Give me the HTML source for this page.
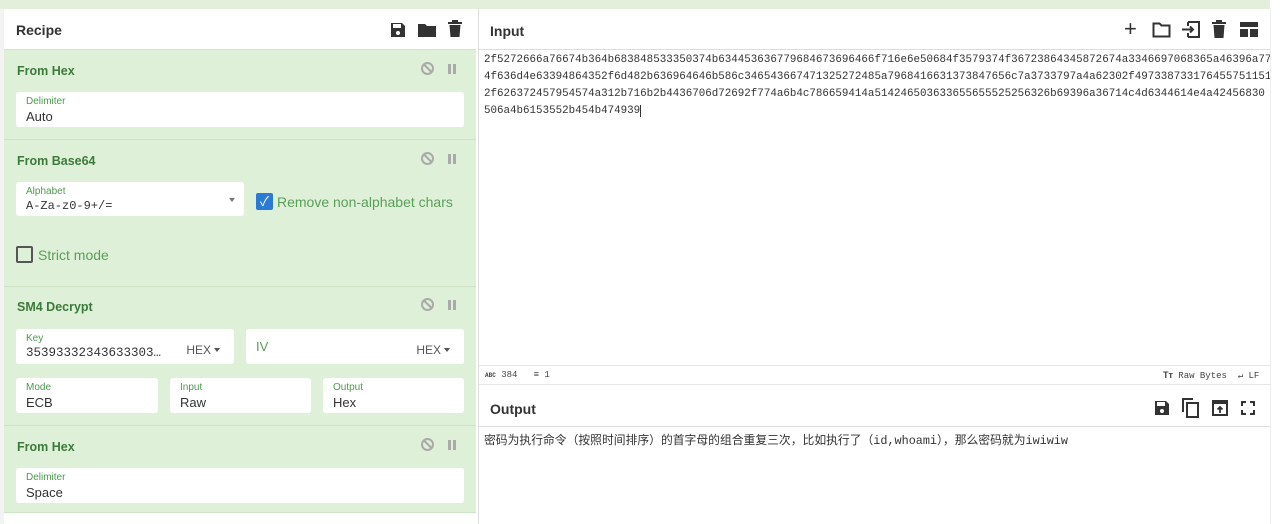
<!DOCTYPE html>
<html><head><meta charset="utf-8"><style>
*{box-sizing:border-box;margin:0;padding:0}
body{width:1280px;height:524px;overflow:hidden;background:#fff;font-family:"Liberation Sans","Noto Sans CJK SC",sans-serif;position:relative;color:#333}
.a{position:absolute}
.top{left:0;top:0;width:1270px;height:9px;background:#e3efdb}
.hdr{background:#fff;border-bottom:1px solid #ddd;height:40px}
.hdr b{position:absolute;left:12px;top:12px;font-size:14px;color:#333}
.card{left:4px;width:472px;background:#dff0d8;border-bottom:1px solid #cfe3c7}
.ct{position:absolute;left:13px;font-size:12.5px;font-weight:bold;color:#3c7a3c}
.fld{position:absolute;background:#fff;border-radius:3px}
.lb{position:absolute;left:10px;top:4px;font-size:10px;color:#4c9a4c}
.vl{position:absolute;left:10px;top:17px;font-size:13px;color:#333}
.mono{font-family:"Liberation Mono",monospace;font-size:12px}
.ban{position:absolute;width:13px;height:13px;border:2px solid #aaa;border-radius:50%}
.ban:after{content:"";position:absolute;left:3.5px;top:-1px;width:2px;height:11px;background:#aaa;transform:rotate(-45deg)}
.pz{position:absolute;width:8px;height:10px;border-left:3px solid #aaa;border-right:3px solid #aaa}
.hex{position:absolute;right:14px;top:14px;font-size:12px;color:#555}
.hex:after{content:"";display:inline-block;margin-left:3px;vertical-align:2px;border:3.5px solid transparent;border-top:4px solid #555;border-bottom:0}
.txt{font-family:"Liberation Mono",monospace;font-size:10.85px;line-height:17px;color:#333}
</style></head><body>
<div class="a top"></div>
<div class="a" style="left:0;top:9px;width:4px;height:515px;background:#f3f3f3"></div>
<div class="a hdr" style="left:4px;top:10px;width:472px"><b>Recipe</b>
<svg class="a" style="left:385px;top:11px" width="18" height="18" viewBox="0 0 18 18"><path d="M2 2h11l3 3v11H2z" fill="#333"/><rect x="4" y="3" width="8" height="4" fill="#fff"/><circle cx="9" cy="12" r="2" fill="#fff"/></svg>
<svg class="a" style="left:413px;top:12px" width="20" height="16" viewBox="0 0 20 16"><path d="M1 2h7l2 2h9v11H1z" fill="#333"/></svg>
<svg class="a" style="left:443px;top:10px" width="16" height="18" viewBox="0 0 16 18"><rect x="1" y="2" width="14" height="2" fill="#333"/><rect x="5" y="0" width="6" height="2" fill="#333"/><path d="M2.5 5h11l-1 12h-9z" fill="#333"/></svg>
</div>
<div class="a card" style="top:50px;height:90px">
<div class="ct" style="top:14px">From Hex</div>
<div class="ban" style="left:417px;top:12px"></div><div class="pz" style="left:444px;top:14px"></div>
<div class="fld" style="left:12px;top:42px;width:448px;height:35px"><div class="lb">Delimiter</div><div class="vl">Auto</div></div>
</div>
<div class="a card" style="top:140px;height:147px">
<div class="ct" style="top:14px">From Base64</div>
<div class="ban" style="left:417px;top:12px"></div><div class="pz" style="left:444px;top:14px"></div>
<div class="fld" style="left:12px;top:42px;width:228px;height:34px"><div class="lb">Alphabet</div><div class="vl mono">A-Za-z0-9+/=</div><div class="a" style="right:9px;top:16px;border:3.5px solid transparent;border-top:4px solid #777;border-bottom:0"></div></div>
<div class="a" style="left:252px;top:53px;width:17px;height:17px;background:#2b7bd4;border-radius:2px;color:#fff;font-size:13px;text-align:center;line-height:17px">✓</div>
<div class="a" style="left:273px;top:54px;font-size:14px;color:#5a9e5a">Remove non-alphabet chars</div>
<div class="a" style="left:12px;top:106px;width:17px;height:17px;border:2px solid #555;border-radius:2px"></div>
<div class="a" style="left:34px;top:107px;font-size:14px;color:#5a9e5a">Strict mode</div>
</div>
<div class="a card" style="top:287px;height:139px">
<div class="ct" style="top:13px">SM4 Decrypt</div>
<div class="ban" style="left:417px;top:11px"></div><div class="pz" style="left:444px;top:13px"></div>
<div class="fld" style="left:12px;top:42px;width:218px;height:35px"><div class="lb">Key</div><div class="vl mono" style="font-size:12.5px">35393332343633303…</div><div class="hex">HEX</div></div>
<div class="fld" style="left:242px;top:42px;width:218px;height:35px"><div class="a" style="left:10px;top:10px;font-size:13px;color:#5a9e5a">IV</div><div class="hex">HEX</div></div>
<div class="fld" style="left:12px;top:91px;width:142px;height:35px"><div class="lb">Mode</div><div class="vl">ECB</div></div>
<div class="fld" style="left:166px;top:91px;width:141px;height:35px"><div class="lb">Input</div><div class="vl">Raw</div></div>
<div class="fld" style="left:319px;top:91px;width:141px;height:35px"><div class="lb">Output</div><div class="vl">Hex</div></div>
</div>
<div class="a card" style="top:426px;height:87px">
<div class="ct" style="top:14px">From Hex</div>
<div class="ban" style="left:417px;top:12px"></div><div class="pz" style="left:444px;top:14px"></div>
<div class="fld" style="left:12px;top:42px;width:448px;height:35px"><div class="lb">Delimiter</div><div class="vl">Space</div></div>
</div>
<div class="a" style="left:478px;top:9px;width:1px;height:515px;background:#ddd"></div>
<div class="a hdr" style="left:479px;top:10px;width:791px"><b style="left:11px;top:13px;font-size:14px">Input</b>
<div class="a" style="left:645px;top:6px;font-size:22px;color:#333">+</div>
<svg class="a" style="left:673px;top:12px" width="19" height="16" viewBox="0 0 19 16"><path d="M1.5 1.5h6l2 2h8v11h-16z" fill="none" stroke="#333" stroke-width="2"/></svg>
<svg class="a" style="left:702px;top:11px" width="19" height="17" viewBox="0 0 19 17"><path d="M7 1h11v15H7M7 1v4M7 16v-4M1 8.5h11M9 5.5l3 3-3 3" fill="none" stroke="#333" stroke-width="2"/></svg>
<svg class="a" style="left:733px;top:10px" width="14" height="19" viewBox="0 0 14 19"><rect x="0" y="2" width="14" height="2" fill="#333"/><rect x="4" y="0" width="6" height="2" fill="#333"/><path d="M1.5 5h11l-1 13h-9z" fill="#333"/></svg>
<svg class="a" style="left:761px;top:12px" width="18" height="15" viewBox="0 0 18 15"><rect x="0" y="0" width="18" height="5" fill="#333"/><rect x="0" y="7" width="8" height="8" fill="#333"/><rect x="10" y="7" width="8" height="8" fill="#333"/></svg>
</div>
<div class="a txt" style="left:484px;top:52px;width:790px;white-space:pre">2f5272666a76674b364b683848533350374b634453636779684673696466f716e6e50684f3579374f36723864345872674a3346697068365a46396a77
4f636d4e63394864352f6d482b636964646b586c346543667471325272485a7968416631373847656c7a3733797a4a62302f497338733176455751151
2f626372457954574a312b716b2b4436706d72692f774a6b4c786659414a514246503633655655525256326b69396a36714c4d6344614e4a42456830
506a4b6153552b454b474939<span style="border-left:1px solid #333"></span></div>
<div class="a" style="left:479px;top:365px;width:791px;height:1px;background:#e5e5e5"></div>
<div class="a txt" style="left:485px;top:367px;font-size:9px;color:#444"><b style="font-size:6px">ABC</b> 384 &nbsp;&nbsp;<b>≡</b> 1</div>
<div class="a txt" style="left:1163px;top:367px;font-size:9px;color:#444"><b style="font-family:'Liberation Sans'">Tт</b> Raw Bytes &nbsp;↵ LF</div>
<div class="a" style="left:479px;top:384px;width:791px;height:1px;background:#e5e5e5"></div>
<div class="a hdr" style="left:479px;top:390px;width:791px;height:37px"><b style="left:11px;top:11px">Output</b>
<svg class="a" style="left:675px;top:10px" width="16" height="16" viewBox="0 0 16 16"><path d="M1 1h11l3 3v11H1z" fill="#333"/><rect x="3" y="2" width="8" height="4" fill="#fff"/><circle cx="8" cy="11" r="2" fill="#fff"/></svg>
<svg class="a" style="left:703px;top:8px" width="18" height="20" viewBox="0 0 18 20"><path d="M1 14V1h10" fill="none" stroke="#333" stroke-width="2"/><rect x="5" y="5" width="11" height="14" fill="none" stroke="#333" stroke-width="2"/></svg>
<svg class="a" style="left:733px;top:10px" width="16" height="16" viewBox="0 0 16 16"><rect x="1" y="1" width="14" height="14" fill="none" stroke="#333" stroke-width="2"/><rect x="1" y="1" width="14" height="3" fill="#333"/><path d="M8 13V7M5.5 9.5 8 7l2.5 2.5" fill="none" stroke="#333" stroke-width="1.8"/></svg>
<svg class="a" style="left:762px;top:11px" width="14" height="14" viewBox="0 0 14 14"><path d="M1 5V1h4M9 1h4v4M13 9v4H9M5 13H1V9" fill="none" stroke="#333" stroke-width="2"/></svg>
</div>
<div class="a" style="left:484px;top:431px;font-size:11.8px;color:#333;font-family:'Liberation Mono','Noto Sans CJK SC',monospace">密码为执行命令（按照时间排序）的首字母的组合重复三次，比如执行了（id,whoami），那么密码就为iwiwiw</div>
<div class="a" style="left:1270px;top:9px;width:1px;height:515px;background:#eee"></div>
</body></html>
